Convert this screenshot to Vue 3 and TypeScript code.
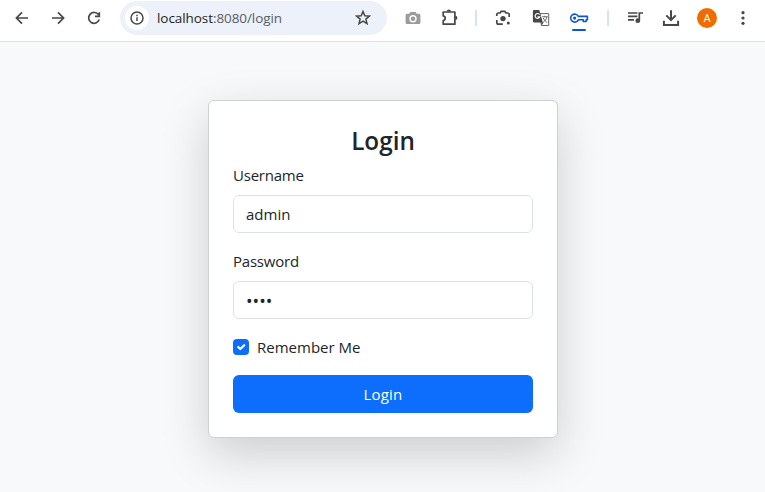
<script setup lang="ts">
import { ref } from 'vue'

const username = ref('admin')
const password = ref('1234')
const remember = ref(true)
</script>

<template>
  <div class="window">
    <header class="toolbar">
      <span class="slot">
        <svg width="20" height="20" viewBox="0 0 20 20" class="line"><path d="M16 10H4.8M10 4.4 4.4 10l5.6 5.6" /></svg>
      </span>
      <span class="slot">
        <svg width="20" height="20" viewBox="0 0 20 20" class="line"><path d="M4 10h11.2M10 4.4l5.6 5.6-5.6 5.6" /></svg>
      </span>
      <span class="slot">
        <svg width="20" height="20" viewBox="0 0 20 20" class="line"><path d="M14.6 6.9A5.4 5.4 0 1 0 15.2 11.6M15.3 4.2v4.1h-4.4" /></svg>
      </span>

      <div class="omnibox">
        <span class="site-info">
          <svg width="16" height="16" viewBox="0 0 16 16" class="line">
            <circle cx="8" cy="8" r="6" stroke-width="1.5" />
            <path d="M8 7.3v3.8M8 4.7v1.5" stroke-width="1.5" />
          </svg>
        </span>
        <span class="url">localhost<span class="path">:8080/login</span></span>
        <svg class="line star" width="18" height="18" viewBox="0 0 18 18"><path d="m9 2.5 1.8 4.2 4.6.4-3.5 3 1.1 4.5L9 12.2l-4 2.4 1.1-4.5-3.5-3 4.6-.4z" stroke-width="1.5" /></svg>
      </div>

      <span class="slot">
        <svg width="18" height="18" viewBox="0 0 18 18">
          <path fill="#9b9b9b" fill-rule="evenodd" d="M6.5 3h5l1.2 1.8h2.1c.9 0 1.6.7 1.6 1.6v7c0 .9-.7 1.6-1.6 1.6H3.2c-.9 0-1.6-.7-1.6-1.6v-7c0-.9.7-1.6 1.6-1.6h2.1zM9 6.1a3.7 3.7 0 1 0 0 7.4 3.7 3.7 0 0 0 0-7.4z" />
          <circle cx="9" cy="9.8" r="2.3" fill="#9b9b9b" />
        </svg>
      </span>
      <span class="slot">
        <svg width="20" height="20" viewBox="0 0 20 20">
          <path class="line" d="M4.2 4h11.7v12.2H4.2v-3.7c2.7-.5 2.7-4.1 0-4.6z" stroke-width="1.7" stroke-linejoin="round" />
          <path class="solid" d="M7.8 3.5a2.1 2.1 0 0 1 4.2 0zM16.3 7.8a2.1 2.1 0 0 1 0 4.2z" />
        </svg>
      </span>
      <span class="divider"></span>
      <span class="slot">
        <svg width="20" height="20" viewBox="0 0 20 20">
          <path class="line" d="M3.8 8V6.7q0-1.7 1.7-1.7h1.6l1-1.6h3.8l1 1.6h1.6q1.7 0 1.7 1.7V9M3.8 12v2.4q0 1.7 1.7 1.7h4.3" stroke-width="1.8" />
          <circle class="solid" cx="10" cy="10.6" r="2.7" />
          <circle class="solid" cx="15.3" cy="15" r="1.5" />
        </svg>
      </span>
      <span class="slot wide">
        <svg width="20" height="20" viewBox="0 0 20 20">
          <path d="M8 5.6h9.7v11.9H10.5z" fill="#fff" stroke="#606367" stroke-width="1" />
          <path class="solid" d="M3 2h5.3l3.5 12.4H3q-1.1 0-1.1-1.1V3.1Q1.9 2 3 2zM10.4 14.4h2.2l-2 3z" />
          <path d="M8.5 6.5a2.4 2.4 0 1 0 .3 2.3H6.5" fill="none" stroke="#fff" stroke-width="1.2" />
          <path d="M11.2 8.8h5.5M13.8 7.8v1M15.8 9c-.5 2.3-1.8 4-3.6 5.1M12.3 10c.7 1.8 2 3.4 3.9 4.5" fill="none" stroke="#606367" />
        </svg>
      </span>
      <span class="slot active">
        <svg width="20" height="20" viewBox="0 0 20 20" fill="none" stroke="#0b57d0">
          <path d="M9.3 8.4h9.1v3.4h-1.2v1.7h-2.9v-1.7h-5a4 4 0 1 1 0-3.4z" stroke-width="1.6" stroke-linejoin="round" />
          <circle cx="5.6" cy="10.1" r="1.6" fill="#0b57d0" stroke="none" />
        </svg>
      </span>
      <span class="divider after-key"></span>
      <span class="slot">
        <svg width="20" height="20" viewBox="0 0 20 20">
          <path class="line" d="M3 5h9.4M3 8.4h9.4M3 11.8h6M14.3 12.3V5h3.7" stroke-width="1.7" />
          <circle class="solid" cx="12.8" cy="12.7" r="2.4" />
        </svg>
      </span>
      <span class="slot">
        <svg width="20" height="20" viewBox="0 0 20 20" class="line"><path d="M10 2.2v9.5M5.3 7.4 10 12.1l4.7-4.7M2.9 12.8V17h14.2v-4.2" stroke-width="2" /></svg>
      </span>
      <span class="slot"><span class="avatar">A</span></span>
      <span class="slot">
        <svg width="20" height="20" viewBox="0 0 20 20" class="solid">
          <circle cx="10" cy="4.7" r="1.6" /><circle cx="10" cy="10" r="1.6" /><circle cx="10" cy="15.3" r="1.6" />
        </svg>
      </span>
    </header>

    <main class="page">
      <form class="card" @submit.prevent>
        <h3 class="title">Login</h3>
        <div class="field">
          <label for="username">Username</label>
          <input id="username" v-model="username" type="text" />
        </div>
        <div class="field">
          <label for="password">Password</label>
          <input id="password" v-model="password" type="password" />
        </div>
        <label class="check">
          <input v-model="remember" type="checkbox" />
          <span class="box">
            <svg v-if="remember" width="16" height="16" viewBox="0 0 20 20"><path d="m6.5 10 2.6 2.6L14 7.7" fill="none" stroke="#fff" stroke-width="2.7" stroke-linecap="round" stroke-linejoin="round" /></svg>
          </span>
          <span>Remember Me</span>
        </label>
        <button type="submit">Login</button>
      </form>
    </main>
  </div>
</template>

<style>
body {
  margin: 0;
  overflow: hidden;
}
</style>

<style scoped>
* {
  box-sizing: border-box;
}
.window {
  display: flex;
  flex-direction: column;
  height: 100vh;
  background: #f8f9fb;
  color: #212529;
  font: 15px/24px 'Open Sans', 'Noto Sans', sans-serif;
}
.toolbar {
  display: flex;
  flex: none;
  align-items: center;
  height: 42px;
  padding: 0 2px 5px 4px;
  background: #fff;
  border-bottom: 1px solid #dfe1e4;
}
.slot {
  display: flex;
  flex: none;
  align-items: center;
  justify-content: center;
  width: 36px;
  height: 36px;
}
.slot.wide {
  width: 40px;
}
.line {
  fill: none;
  stroke: #474747;
  stroke-width: 1.7;
}
.solid {
  fill: #474747;
}
.omnibox {
  display: flex;
  flex: none;
  align-items: center;
  width: 267px;
  height: 34px;
  margin: 0 8px;
  padding: 0 15px 0 5px;
  border-radius: 17px;
  background: #ecf1fa;
}
.site-info {
  display: flex;
  align-items: center;
  justify-content: center;
  width: 24px;
  height: 24px;
  border-radius: 50%;
  background: #fff;
}
.url {
  margin-left: 8px;
  color: #1f1f1f;
  font-size: 13.5px;
  letter-spacing: -0.07px;
}
.path {
  color: #5b5e62;
}
.star {
  margin-left: auto;
}
.divider {
  flex: none;
  width: 2px;
  height: 16px;
  margin: 0 8px;
  background: #d3e3fd;
}
.divider.after-key {
  margin-left: 10px;
}
.active {
  position: relative;
}
.active::after {
  content: '';
  position: absolute;
  bottom: 5px;
  left: 11px;
  width: 14px;
  height: 2px;
  border-radius: 1px;
  background: #0b57d0;
}
.avatar {
  width: 20px;
  height: 20px;
  border-radius: 50%;
  background: #ef6c00;
  color: #fff;
  font: 11px/21px Roboto, sans-serif;
  text-align: center;
}
.page {
  display: flex;
  flex: 1;
  align-items: flex-start;
  justify-content: center;
  padding: 58px 0 0 1px;
}
.card {
  width: 350px;
  padding: 24px;
  border: 1px solid #cfd0d1;
  border-radius: 6px;
  background: #fff;
  box-shadow: 0 16px 48px rgba(0, 0, 0, 0.175);
}
.title {
  margin: 0 0 7px;
  padding-top: 1px;
  font-size: 24.3px;
  font-weight: 600;
  line-height: 30px;
  text-align: center;
}
.field {
  margin-bottom: 16px;
}
.field label {
  display: block;
  margin-bottom: 8px;
  letter-spacing: -0.22px;
}
.field input {
  display: block;
  width: 100%;
  height: 38px;
  padding: 6px 12px;
  border: 1px solid #dee2e6;
  border-radius: 6px;
  outline: none;
  background: #fff;
  color: inherit;
  font: inherit;
}
.field input[type='password'] {
  padding-top: 7px;
  padding-bottom: 5px;
  font-size: 17.5px;
}
.check {
  display: flex;
  align-items: center;
  gap: 8px;
  margin-bottom: 16px;
}
.check input {
  display: none;
}
.box {
  width: 16px;
  height: 16px;
  border-radius: 4px;
  background: #0d6efd;
}
.box svg {
  display: block;
}
button {
  display: block;
  width: 100%;
  height: 38px;
  padding: 0;
  border: 0;
  border-radius: 6px;
  background: #0d6efd;
  color: #fff;
  font: inherit;
  letter-spacing: 0.2px;
}
</style>
